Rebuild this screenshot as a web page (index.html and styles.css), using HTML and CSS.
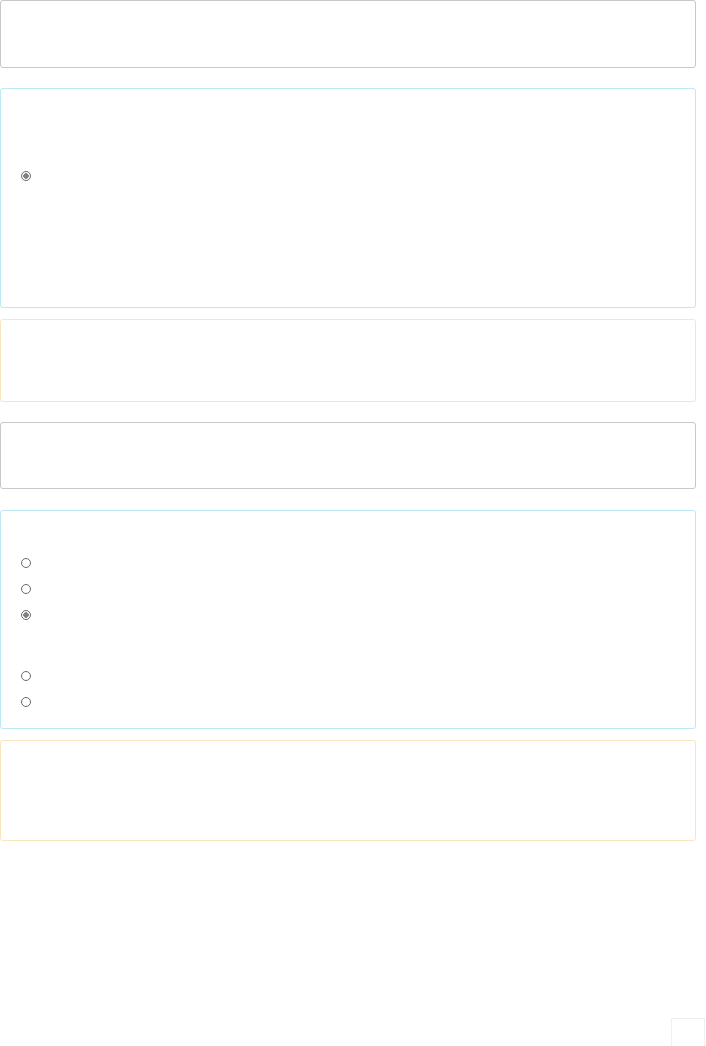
FILE: index.html
```html
<!DOCTYPE html>
<html lang="en">
<head>
  <meta charset="UTF-8">
  <meta name="viewport" content="width=device-width, initial-scale=1.0">
  <link rel="stylesheet" href="styles.css">
  <title>Form</title>
</head>
<body>
  <div class="page">
    <div class="panel panel-default panel-top"></div>

    <div class="panel panel-info panel-q1">
      <div class="options">
        <label class="option"><input type="radio" name="q1" checked></label>
      </div>
    </div>

    <div class="panel panel-warning panel-w1"></div>

    <div class="panel panel-default panel-mid"></div>

    <div class="panel panel-info panel-q2">
      <div class="options">
        <label class="option"><input type="radio" name="q2"></label>
        <label class="option"><input type="radio" name="q2"></label>
        <label class="option"><input type="radio" name="q2" checked></label>
      </div>
      <div class="options options-more">
        <label class="option"><input type="radio" name="q2b"></label>
        <label class="option"><input type="radio" name="q2b"></label>
      </div>
    </div>

    <div class="panel panel-warning panel-w2"></div>
  </div>

  <div class="to-top"></div>
</body>
</html>
```

FILE: styles.css
```css
body {
  margin: 0;
  font-family: "Liberation Sans", Arial, sans-serif;
  background: #fff;
}

.page {
  width: 696px;
  display: flex;
  flex-direction: column;
}

.panel {
  box-sizing: border-box;
  border: 1px solid #ccc;
  border-radius: 3px;
  background: #fff;
}

.panel-default {
  border-color: #c8c8c8;
}

.panel-info {
  border-color: #bce8f1;
}

.panel-warning {
  border-color: #f8e6bd;
}

.panel-top {
  height: 68px;
}

.panel-q1 {
  height: 220px;
  margin-top: 20px;
  padding: 82px 0 0 20px;
}

.panel-w1 {
  height: 83px;
  margin-top: 11px;
}

.panel-mid {
  height: 67px;
  margin-top: 20px;
}

.panel-q2 {
  height: 219px;
  margin-top: 21px;
  padding: 47px 0 0 20px;
}

.panel-w2 {
  height: 101px;
  margin-top: 11px;
}

.options {
  display: flex;
  flex-direction: column;
  gap: 16px;
}

.options-more {
  margin-top: 51px;
}

.option {
  display: block;
  height: 10px;
}

.option input {
  appearance: none;
  -webkit-appearance: none;
  box-sizing: border-box;
  width: 10px;
  height: 10px;
  margin: 0;
  display: block;
  border: 1px solid #6a6a6a;
  border-radius: 50%;
  background: #fff;
}

.option input:checked {
  background: radial-gradient(circle, #808080 0 2.5px, #fff 3px);
}

.to-top {
  position: fixed;
  right: 1px;
  bottom: 0;
  width: 34px;
  height: 28px;
  box-sizing: border-box;
  border: 1px solid #f0f0f0;
  border-bottom: none;
  background: #fff;
}
```
